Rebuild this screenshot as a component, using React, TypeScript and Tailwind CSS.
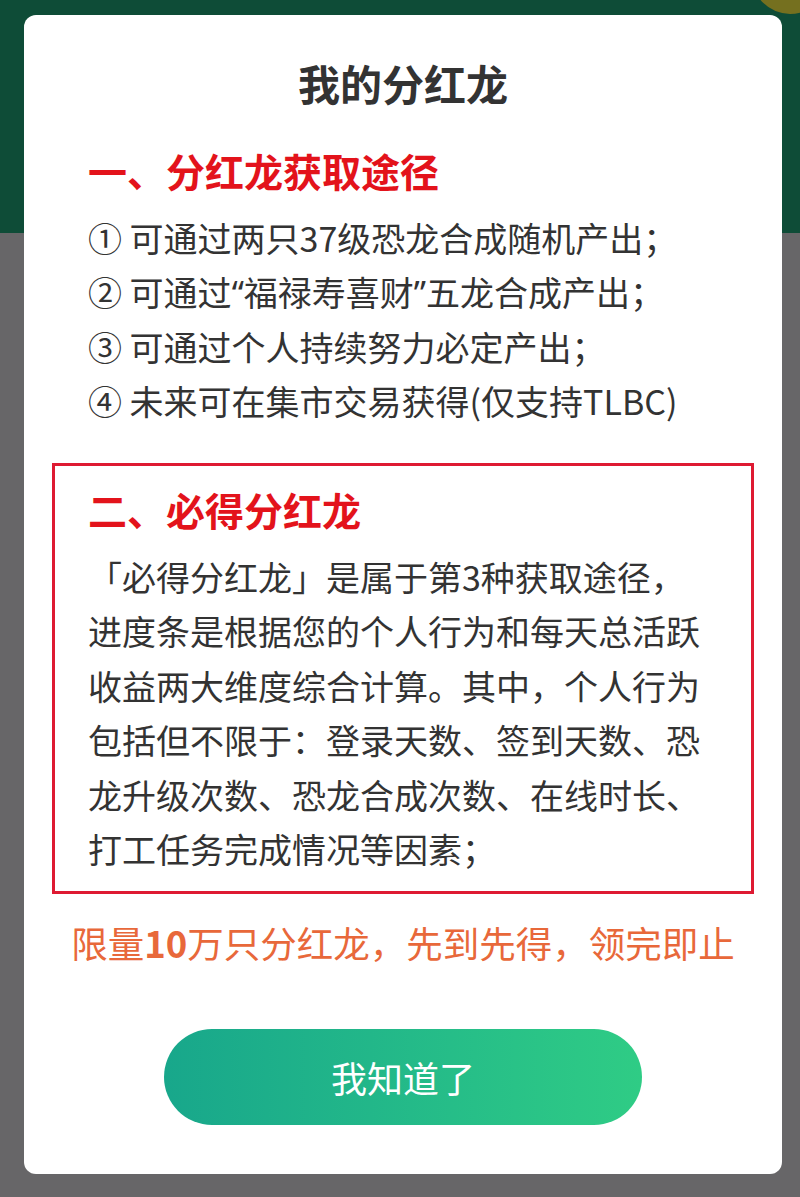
const FONT = "font-['Noto_Sans_CJK_SC','Noto_Sans',sans-serif]";

const ways = [
  "① 可通过两只37级恐龙合成随机产出；",
  "② 可通过“福禄寿喜财”五龙合成产出；",
  "③ 可通过个人持续努力必定产出；",
  "④ 未来可在集市交易获得(仅支持TLBC)",
];

const detail = [
  "「必得分红龙」是属于第3种获取途径，",
  "进度条是根据您的个人行为和每天总活跃",
  "收益两大维度综合计算。其中，个人行为",
  "包括但不限于：登录天数、签到天数、恐",
  "龙升级次数、恐龙合成次数、在线时长、",
  "打工任务完成情况等因素；",
];

// curly quotes render full-width in the CJK face; use the Latin face for them
function withQuotes(text: string) {
  return text.split(/([“”])/).map((part, i) =>
    part === "“" || part === "”" ? (
      <span key={i} className="font-['Noto_Sans',sans-serif]">{part}</span>
    ) : (
      part
    )
  );
}

export default function App() {
  return (
    <div className={`relative h-[1197px] w-[800px] overflow-hidden bg-[#676668] ${FONT}`}>
      {/* dimmed page behind the dialog */}
      <div className="h-[233px] w-full bg-[#0e4c37]" />
      <div className="absolute -right-[28px] -top-[62px] h-[76px] w-[76px] rounded-full bg-[#75701f]" />

      <div className="absolute left-[24px] top-[15px] flex h-[1159px] w-[758px] flex-col rounded-[12px] bg-white px-[28px]">
        <h1 className="mt-[38px] text-center text-[42px] font-bold leading-[60px] text-[#333333]">我的分红龙</h1>

        <section className="px-[36px]">
          <h2 className="mt-[30px] text-[39px] font-bold leading-[54px] text-[#e3131b]">一、分红龙获取途径</h2>
          <ul className="mt-[14px] text-[34px] leading-[54px] text-[#333333]">
            {ways.map((w) => (
              <li key={w} className="whitespace-nowrap">{withQuotes(w)}</li>
            ))}
          </ul>
        </section>

        <section className="mt-[35px] border-[3px] border-[#de1a32] px-[33px] pb-[15px] pt-[16px]">
          <h2 className="text-[39px] font-bold leading-[54px] text-[#e3131b]">二、必得分红龙</h2>
          <div className="mt-[14px] text-[34px] leading-[54.4px] text-[#333333]">
            {detail.map((d) => (
              <div key={d} className="whitespace-nowrap">{d}</div>
            ))}
          </div>
        </section>

        <p className="mt-[24px] whitespace-nowrap text-center text-[36.5px] leading-[50px] text-[#e8683a]">
          限量<span className="font-bold">10</span>万只分红龙，先到先得，领完即止
        </p>

        <button className="mx-auto mt-[61px] h-[96px] w-[478px] rounded-full bg-gradient-to-r from-[#18a78b] to-[#2fcc85] text-[36px] text-white">
          我知道了
        </button>
      </div>
    </div>
  );
}
